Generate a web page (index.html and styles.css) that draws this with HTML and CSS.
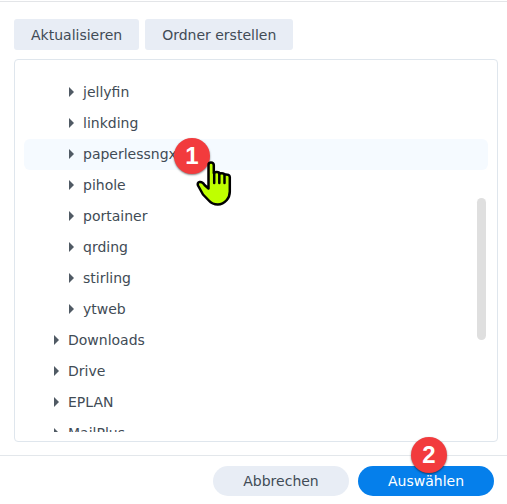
FILE: index.html
```html
<!DOCTYPE html>
<html lang="de">

<head>
  <meta charset="utf-8">
  <title>Ordner auswählen</title>
  <link rel="stylesheet" href="styles.css">
</head>

<body>
  <div class="dialog">
    <div class="toolbar">
      <button type="button" class="tool">Aktualisieren</button>
      <button type="button" class="tool">Ordner erstellen</button>
    </div>

    <div class="panel">
      <div class="viewport">
        <ul class="tree">
          <li>
            <ul class="subtree">
              <li><button type="button" class="node">jellyfin</button></li>
              <li><button type="button" class="node">linkding</button></li>
              <li class="current">
                <button type="button" class="node selected">paperlessngx</button>
                <span class="badge badge-folder">1</span>
                <svg class="pointer" viewBox="0 0 36 46" aria-hidden="true">
                  <path d="M12.5 27.500V4q0-2.500 2.500-2.500T17.800 4v8q1-1 3-1 2.500 0 2.800 1.500 4-1 5 1 5-.5 5.200 2.500v14.500q0 5-3 8.500-4 4.500-9 4.500-5.500 0-9-4L7 33.500 2 24.500q-1-3 1.500-3.500 3-.5 5 3z" />
                  <path d="M18.200 11v11M23.300 12v10M28.500 13.500V22" />
                </svg>
              </li>
              <li><button type="button" class="node">pihole</button></li>
              <li><button type="button" class="node">portainer</button></li>
              <li><button type="button" class="node">qrding</button></li>
              <li><button type="button" class="node">stirling</button></li>
              <li><button type="button" class="node">ytweb</button></li>
            </ul>
          </li>
          <li><button type="button" class="node">Downloads</button></li>
          <li><button type="button" class="node">Drive</button></li>
          <li><button type="button" class="node">EPLAN</button></li>
          <li><button type="button" class="node">MailPlus</button></li>
        </ul>
      </div>
      <div class="scrollbar"></div>
    </div>

    <div class="footer">
      <button type="button" class="action">Abbrechen</button>
      <button type="button" class="action primary">Auswählen<span class="badge badge-select">2</span></button>
    </div>
  </div>
</body>

</html>
```

FILE: styles.css
```css
* {
  box-sizing: border-box;
}

body {
  margin: 0;
  background: #fff;
  color: #414b55;
  font: 14px/20px "DejaVu Sans", Verdana, sans-serif;
}

button {
  border: none;
  color: inherit;
  font: inherit;
  cursor: pointer;
}

ul {
  list-style: none;
  margin: 0;
  padding: 0;
}

.dialog {
  display: flex;
  flex-direction: column;
  height: 100vh;
  padding-top: 1px;
}

.toolbar {
  display: flex;
  gap: 6px;
  padding: 17px 14px 9px;
  border-top: 1px solid #e3e5e8;
}

.tool {
  height: 31px;
  padding: 0 17px;
  border-radius: 3px;
  background: #e8edf5;
}

.panel {
  position: relative;
  display: flex;
  flex: 1;
  min-height: 0;
  margin: 0 9px 13px 14px;
  padding: 9px;
  border: 1px solid #dfe6ed;
  border-radius: 4px;
}

.viewport {
  flex: 1;
  overflow: hidden;
}

.tree {
  padding-top: 8px;
}

.node {
  display: flex;
  align-items: center;
  gap: 9px;
  width: 100%;
  height: 31px;
  padding: 0 0 2px 30px;
  border-radius: 6px;
  background: none;
}

.node::before {
  content: "";
  border: 5px solid transparent;
  border-left-color: #505a64;
  border-right: none;
}

.subtree .node {
  padding-left: 45px;
}

.node.selected {
  background: #f5faff;
}

.current {
  position: relative;
}

.scrollbar {
  position: absolute;
  top: 138px;
  right: 11px;
  width: 9px;
  height: 142px;
  border-radius: 5px;
  background: #dfdfdf;
}

.footer {
  display: flex;
  justify-content: flex-end;
  gap: 9px;
  padding: 10px 13px 8px;
  border-top: 1px solid #e3e7eb;
}

.action {
  position: relative;
  width: 136px;
  height: 30px;
  border-radius: 15px;
  background: #e8edf5;
}

.primary {
  background: #057feb;
  color: #fff;
}

.badge {
  position: absolute;
  width: 36px;
  height: 36px;
  border-radius: 50%;
  background: #f23b3d;
  box-shadow: 0 1px 2px rgba(0, 0, 0, 0.5);
  color: #fff;
  font: bold 24px/36px "Liberation Sans", Arial, sans-serif;
  text-align: center;
}

.badge-folder {
  top: -1px;
  left: 150px;
}

.badge-select {
  top: -29px;
  left: 53px;
}

.pointer {
  position: absolute;
  top: 22px;
  left: 172px;
  z-index: 1;
  width: 36px;
  height: 46px;
  fill: #bfff00;
  stroke: #000;
  stroke-width: 2.5;
  stroke-linecap: round;
  stroke-linejoin: round;
}
```
